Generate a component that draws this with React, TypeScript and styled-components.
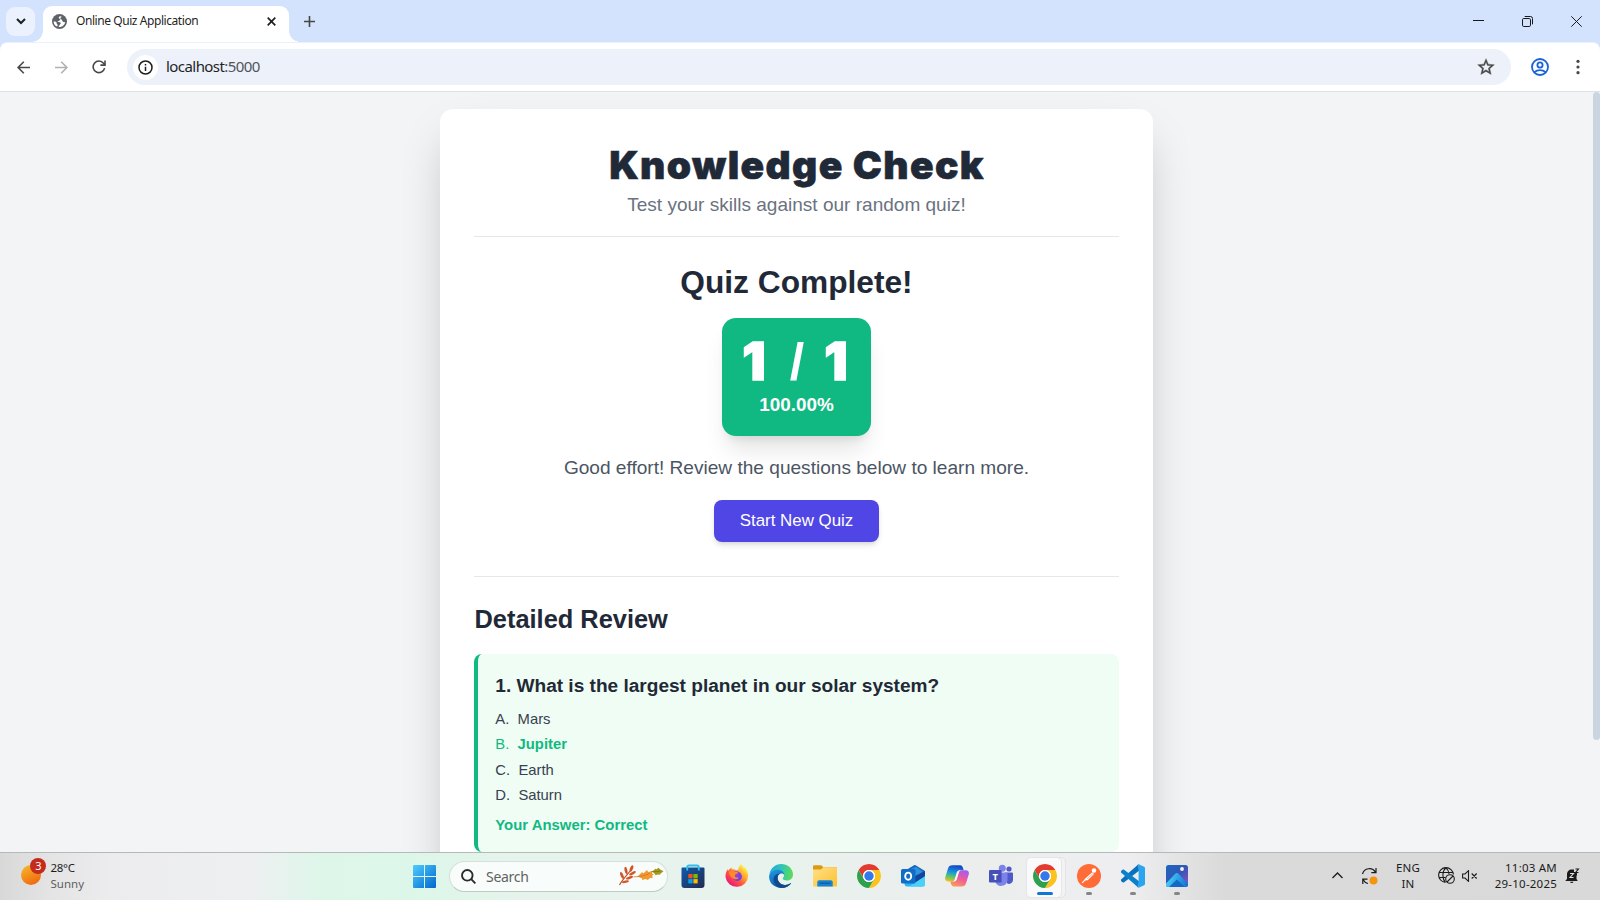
import React from "react";
import styled, { createGlobalStyle } from "styled-components";

const UI = `"Noto Sans", "Open Sans", sans-serif`;
const BODY = `"Liberation Sans", Arial, sans-serif`;

const GlobalStyle = createGlobalStyle`
  * { box-sizing: border-box; }
  body { margin: 0; overflow: hidden; }
  h1, h2, h3, p, ul { margin: 0; padding: 0; }
  svg { display: block; flex: none; }
`;

const Screen = styled.div`
  width: 1600px;
  height: 900px;
  display: flex;
  flex-direction: column;
  overflow: hidden;
  background: #f3f4f6;
`;

/* ---------- browser ---------- */

const TabStrip = styled.div`
  height: 42px;
  flex: none;
  display: flex;
  align-items: flex-start;
  padding: 6px 0 0 6px;
  background: #d3e3fd;
  font-family: ${UI};
`;

const TabSearch = styled.div`
  width: 29px;
  height: 29px;
  margin: 1px 8px 0 0;
  border-radius: 9px;
  background: #ebf2fe;
  display: grid;
  place-items: center;
`;

const Tab = styled.div`
  position: relative;
  width: 246px;
  height: 36px;
  display: flex;
  align-items: center;
  padding: 0 13px 6px 9px;
  border-radius: 9px 9px 0 0;
  background: #fff;
  color: #1f1f1f;
  &::before,
  &::after {
    content: "";
    position: absolute;
    bottom: 0;
    width: 11px;
    height: 11px;
  }
  &::before {
    left: -11px;
    background: radial-gradient(circle at 0 0, transparent 10.5px, #fff 11px);
  }
  &::after {
    right: -11px;
    background: radial-gradient(circle at 100% 0, transparent 10.5px, #fff 11px);
  }
`;

const TabTitle = styled.span`
  flex: 1;
  margin-left: 9px;
  font-size: 12px;
  line-height: 18px;
  letter-spacing: -0.43px;
  white-space: nowrap;
`;

const NewTab = styled.div`
  width: 41px;
  height: 31px;
  display: grid;
  place-items: center;
`;

const WindowControls = styled.div`
  margin-left: auto;
  margin-right: -1px;
  display: flex;
`;

const WindowButton = styled.div`
  width: 49px;
  height: 31px;
  display: grid;
  place-items: center;
`;

const ToolbarShell = styled.div`
  flex: none;
  background: #d3e3fd;
`;

const Toolbar = styled.div`
  height: 50px;
  display: flex;
  align-items: center;
  padding: 1px 6px 0 4px;
  background: linear-gradient(#e9f1fe 0, #e9f1fe 1px, #fff 1px);
  border-bottom: 1px solid #dfe1e5;
  border-radius: 8px 8px 0 0;
`;

const ToolButton = styled.div<{ $w: number }>`
  width: ${(p) => p.$w}px;
  height: 36px;
  display: grid;
  place-items: center;
`;

const Omnibox = styled.div`
  width: 1384px;
  height: 36px;
  margin-left: 9px;
  display: flex;
  align-items: center;
  padding: 0 15px 0 6px;
  border-radius: 18px;
  background: #ecf1fa;
  font-family: ${UI};
`;

const SiteInfo = styled.div`
  width: 25px;
  height: 25px;
  border-radius: 50%;
  background: #fff;
  display: grid;
  place-items: center;
`;

const Url = styled.span`
  flex: 1;
  margin-left: 8px;
  padding-bottom: 2px;
  font-size: 15px;
  line-height: 20px;
  letter-spacing: -0.56px;
  color: #1f1f1f;
`;

const Port = styled.span`
  color: #50545a;
`;

/* ---------- page ---------- */

const Page = styled.main`
  height: 760px;
  flex: none;
  display: flex;
  justify-content: flex-end;
  align-items: flex-start;
  overflow: hidden;
  font-family: ${BODY};
`;

const ScrollThumb = styled.div`
  width: 7px;
  height: 648px;
  margin-left: 440px;
  border-radius: 4px;
  background: #cbd5e1;
`;

const Card = styled.section`
  width: 713px;
  height: 900px;
  flex: none;
  margin-top: 17px;
  padding: 32px 34px;
  border-radius: 13px;
  background: #fff;
  box-shadow: 0 24px 47px -11px rgba(0, 0, 0, 0.25);
`;

const CardHeader = styled.header`
  height: 96px;
  border-bottom: 1px solid #e5e7eb;
  text-align: center;
`;

const Title = styled.h1`
  padding-left: 1px;
  font-family: Inter, sans-serif;
  font-weight: 900;
  font-size: 39px;
  line-height: 48px;
  letter-spacing: 1.35px;
  -webkit-text-stroke: 0.6px #1f2937;
  color: #1f2937;
  white-space: nowrap;
`;

const Subtitle = styled.p`
  margin-top: 2px;
  font-size: 19.05px;
  line-height: 28px;
  color: #6b7280;
`;

const Result = styled.div`
  height: 340px;
  display: flex;
  flex-direction: column;
  align-items: center;
  border-bottom: 1px solid #e5e7eb;
`;

const ResultHeading = styled.h2`
  margin-top: 25px;
  font-size: 31.7px;
  line-height: 40px;
  color: #1f2937;
`;

const ScoreBox = styled.div`
  width: 149px;
  height: 118px;
  margin-top: 16px;
  padding-top: 16px;
  border-radius: 14px;
  background: #10b981;
  box-shadow: 0 19px 23px -5px rgba(0, 0, 0, 0.1), 0 7px 10px -5px rgba(0, 0, 0, 0.1);
  color: #fff;
  text-align: center;
`;

const Score = styled.div`
  display: flex;
  justify-content: center;
  align-items: baseline;
  gap: 20px;
  height: 57px;
  padding-right: 3px;
  font-family: Inter, sans-serif;
  font-weight: 900;
  font-size: 52px;
  line-height: 56px;
  -webkit-text-stroke: 1.4px #fff;
`;

const Slash = styled.span`
  margin-left: 4px;
  font-family: ${BODY};
  font-weight: 700;
  -webkit-text-stroke: 0;
`;

const Percent = styled.div`
  font-size: 18.9px;
  font-weight: 700;
  line-height: 28px;
`;

const Message = styled.p`
  margin-top: 18px;
  font-size: 19.08px;
  line-height: 28px;
  color: #4b5563;
`;

const PrimaryButton = styled.button`
  width: 165px;
  height: 42px;
  margin-top: 18px;
  padding: 0 0 1px;
  border: 0;
  border-radius: 8px;
  background: #4f46e5;
  box-shadow: 0 4px 6px -1px rgba(0, 0, 0, 0.12), 0 2px 4px -2px rgba(0, 0, 0, 0.1);
  font-family: ${BODY};
  font-size: 16.9px;
  color: #fff;
`;

const ReviewHeading = styled.h3`
  margin-top: 26px;
  padding-left: 0.5px;
  font-size: 25.4px;
  line-height: 33px;
  color: #1f2937;
`;

const ReviewItem = styled.article`
  height: 198px;
  margin-top: 18px;
  padding: 18px 17px 17px 17.3px;
  border-left: 4px solid #10b981;
  border-radius: 8px;
  background: #f0fdf4;
`;

const Question = styled.p`
  font-size: 19.07px;
  font-weight: 700;
  line-height: 28px;
  color: #1f2937;
`;

const Options = styled.ul`
  margin-top: 7px;
  list-style: none;
`;

const Option = styled.li<{ $correct?: boolean }>`
  display: flex;
  gap: 8.3px;
  height: 25.3px;
  font-size: 14.8px;
  line-height: 25px;
  color: ${(p) => (p.$correct ? "#10b981" : "#374151")};
  span + span {
    font-weight: ${(p) => (p.$correct ? 700 : 400)};
  }
`;

const Verdict = styled.p`
  margin-top: 6px;
  font-size: 14.9px;
  font-weight: 700;
  line-height: 22px;
  color: #10b981;
`;

/* ---------- taskbar ---------- */

const Taskbar = styled.footer`
  height: 48px;
  flex: none;
  display: flex;
  align-items: center;
  padding-bottom: 1px;
  border-top: 1px solid #b4bab8;
  background: linear-gradient(
    90deg,
    #d8d8d8 0,
    #e4e4e5 50px,
    #ececee 110px,
    #eeeff1 250px,
    #def6ea 320px,
    #dcf7e9 410px,
    #e6f3ec 520px,
    #e8f3ed 760px,
    #ebeeed 930px,
    #eeeef0 1130px,
    #dadada 1225px,
    #d9d9d9 1600px
  );
  font-family: ${UI};
`;

const Weather = styled.div`
  width: 413px;
  display: flex;
  align-items: center;
  padding: 0 0 1px 20px;
`;

const TwoLines = styled.div<{ $align?: string; $ml: number; $w?: number; $ls?: number }>`
  width: ${(p) => (p.$w ? p.$w + "px" : "auto")};
  margin-left: ${(p) => p.$ml}px;
  font-size: 11.5px;
  line-height: 16px;
  letter-spacing: ${(p) => p.$ls ?? 0}px;
  text-align: ${(p) => p.$align ?? "left"};
  color: #1b1b1b;
  white-space: nowrap;
`;

const Muted = styled.div`
  color: #5e5f61;
  letter-spacing: 0;
`;

const StartButton = styled.div`
  padding-top: 1px;
`;

const SearchBox = styled.div`
  width: 219px;
  height: 31px;
  margin: 0 3px 0 13px;
  display: flex;
  align-items: center;
  padding: 0 3px 0 11px;
  border: 1px solid #d4e0da;
  border-bottom-color: #bfcac5;
  border-radius: 16px;
  background: #f8fcfa;
`;

const SearchLabel = styled.span`
  flex: 1;
  margin-left: 10px;
  font-size: 14px;
  letter-spacing: -0.3px;
  color: #5f6362;
`;

const Apps = styled.div`
  display: flex;
`;

const AppSlot = styled.div<{ $active?: boolean }>`
  position: relative;
  width: 44px;
  height: 46px;
  display: grid;
  place-items: center;
  &::before {
    content: "";
    display: ${(p) => (p.$active ? "block" : "none")};
    position: absolute;
    left: 3px;
    top: 4px;
    width: 38px;
    height: 39px;
    border: 1px solid #e4e4e6;
    border-radius: 5px;
    background: #f3f3f5;
  }
  &::after {
    content: "";
    display: ${(p) => (p.$active ? "block" : "none")};
    position: absolute;
    left: 3px;
    top: 4px;
    width: 34px;
    height: 39px;
    border: 1px solid #e6e6e8;
    border-radius: 5px;
    background: #fafafb;
  }
  svg {
    position: relative;
    z-index: 1;
  }
`;

const Indicator = styled.div<{ $active?: boolean }>`
  position: absolute;
  z-index: 2;
  left: 50%;
  bottom: 4px;
  width: ${(p) => (p.$active ? 16 : 6)}px;
  height: 3px;
  border-radius: 2px;
  transform: translateX(-50%);
  background: ${(p) => (p.$active ? "#0a78d4" : "#868686")};
`;

const Tray = styled.div`
  margin-left: auto;
  display: flex;
  align-items: center;
  padding: 0 13px 1px 0;
`;

const TrayIcon = styled.div<{ $w: number }>`
  width: ${(p) => p.$w}px;
  display: grid;
  place-items: center;
`;

/* ---------- app icons ---------- */

const SiteIcon = () => (
  <svg width="15" height="15" viewBox="0 0 15 15">
    <circle cx="7.500" cy="7.500" r="7.500" fill="#5f6368" />
    <path d="M8.300 2.200c-1.200.2-1.700.9-1.400 1.700.3.800 1.200.6 1.300 1.500.1.800-.9 1-1.500 1.500H5.500c.4 1.200 2.300.8 3 1.700.7.900-.3 1.800-1 2.500-.4.500-.4 1.300-1 1.900 3.300.6 6.300-1.700 6.700-4.900-1 .2-1.900 0-2.500-.6-.6-.7-.3-1.500-1.200-2-.7-.4-1.200-.5-1.100-1.200.100-.8.900-.9 1.300-1.600-.4-.3-.8-.5-1.400-.5z" fill="#fff" />
    <path d="M1.700 7.200c.9.300 2 .2 2.700 1 .5.600 0 1.200.5 1.700.4.400.8.500.8 1.200l-.5 1.400C3.200 12 1.500 9.900 1.700 7.200z" fill="#fff" />
  </svg>
);

const StoreIcon = () => (
  <svg width="24" height="24" viewBox="0 0 24 24">
    <defs>
      <linearGradient id="st" x1="0" y1="0" x2="1" y2="1">
        <stop offset="0" stopColor="#0f5ba8" />
        <stop offset="1" stopColor="#232a52" />
      </linearGradient>
    </defs>
    <path d="M.5 4.500a1 1 0 0 1 1-1h21a1 1 0 0 1 1 1V21a3 3 0 0 1-3 3h-17a3 3 0 0 1-3-3z" fill="url(#st)" />
    <path d="M6.200 6.500V3.200A1.700 1.700 0 0 1 7.900 1.500h8.200a1.700 1.700 0 0 1 1.700 1.700V6.500" fill="none" stroke="#2cc0ee" strokeWidth="1.900" />
    <rect x="7.300" y="10" width="4.300" height="4.300" fill="#f25022" />
    <rect x="12.400" y="10" width="4.300" height="4.300" fill="#7fba00" />
    <rect x="7.300" y="15.100" width="4.300" height="4.300" fill="#00a4ef" />
    <rect x="12.400" y="15.100" width="4.300" height="4.300" fill="#ffb900" />
  </svg>
);

const FirefoxIcon = () => (
  <svg width="24" height="24" viewBox="0 0 24 24">
    <defs>
      <linearGradient id="ff" x1=".85" y1=".1" x2=".15" y2=".9">
        <stop offset="0" stopColor="#fff44f" />
        <stop offset=".3" stopColor="#ffb12e" />
        <stop offset=".6" stopColor="#ff5b3c" />
        <stop offset="1" stopColor="#e8127d" />
      </linearGradient>
      <linearGradient id="fp" x1="0" y1="0" x2="1" y2="1">
        <stop offset="0" stopColor="#c040d8" />
        <stop offset="1" stopColor="#5a3fe0" />
      </linearGradient>
    </defs>
    <path d="M16 .3c1.400 1 2.400 2.300 3 4l.9-1.200c2 2.600 3.300 5.700 3.300 9A11.400 11.400 0 0 1 .6 13.500C.3 10 1.200 7 2.900 5.200l.4 1.600C4.200 5.300 5.400 4.200 6.900 3.500l-.3 1.900c1.900-.3 3.500 0 4.900.8l1.800-.6C13.600 3.500 14.500 1.700 16 .3z" fill="url(#ff)" />
    <path d="M7.300 11c-.4-2 .9-3.300 2.300-3.600C13.500 6.400 17 9 16.900 12.700c-.1 2.500-2.200 4.300-4.700 4.300-3 0-5-2.200-4.900-6z" fill="url(#fp)" />
    <path d="M3.800 8c1.900-1.500 4.200-1.300 5.600-.2l2.900.3c.9.100.8 1-.1 1.500-1.400.7-2 .7-2.300 2.100-.2 1.500 1.500 2.300 3.900 1.700-1.200 2-4 2.600-6.200.9C5.600 12.800 4 10.500 3.800 8z" fill="#ff8a2c" />
  </svg>
);

const EdgeIcon = () => (
  <svg width="24" height="24" viewBox="0 0 24 24">
    <defs>
      <linearGradient id="eg" x1="0" y1=".3" x2="1" y2=".4">
        <stop offset="0" stopColor="#2aa6e2" />
        <stop offset=".5" stopColor="#2fc5b8" />
        <stop offset="1" stopColor="#5ddc55" />
      </linearGradient>
      <linearGradient id="eb" x1="0" y1="0" x2=".5" y2="1">
        <stop offset="0" stopColor="#1b9de2" />
        <stop offset="1" stopColor="#0d56a8" />
      </linearGradient>
    </defs>
    <path d="M.4 10.300C1.300 4.300 6.200 0 12.100 0 18.800 0 24 4.800 24 10.400c0 3.500-2.500 6-5.800 6-2.700 0-4.400-1-4.400-2 0-.8 1.300-1.200 1.300-3.400 0-2.400-2.500-4.800-6.500-4.800C4.900 6.200 2.200 7.700.4 10.300z" fill="url(#eg)" />
    <path d="M.1 12.300C.3 8.400 4.200 5.700 8.600 5.700c4 0 6.700 2.500 6.700 5.200-1-1.300-2.400-1.700-3.700-1.400-2.500.7-3.300 3-2.900 5.500.6 3.600 4 6.200 7.600 5.900 2-.1 3.800-.8 5-1.700.5-.2.700.1.500.5C19.700 22.400 16.200 24 12.400 24 5.500 24-.2 19 .1 12.300z" fill="url(#eb)" />
    <path d="M8.700 15c-.4-2.500.6-4.900 2.900-5.500-5-.5-8 3.500-6.700 8.200 1.200 4 5 6.300 8.700 6.200 3.500-.2 6.400-2 8.200-4.200.2-.4 0-.7-.5-.5-1.200.9-3 1.600-5 1.700-3.600.3-7-2.300-7.600-5.900z" fill="#114a8b" />
  </svg>
);

const FolderIcon = () => (
  <svg width="24" height="24" viewBox="0 0 24 24">
    <defs>
      <linearGradient id="fo" x1="0" y1="0" x2="1" y2="1">
        <stop offset="0" stopColor="#ffe088" />
        <stop offset="1" stopColor="#fcc12f" />
      </linearGradient>
    </defs>
    <path d="M0 2.500A1.200 1.200 0 0 1 1.200 1.300h7l2.300 2H23a1 1 0 0 1 1 1V7H0z" fill="#dc9a12" />
    <path d="M0 5.600h8l2.300-2.300H23a1 1 0 0 1 1 1V21.500a1 1 0 0 1-1 1H1a1 1 0 0 1-1-1z" fill="url(#fo)" />
    <path d="M4.300 22.500v-4.200a2 2 0 0 1 2-2h11.400a2 2 0 0 1 2 2v4.200z" fill="#1683d2" />
    <path d="M6.800 19.200h10.400" stroke="#0c5ca8" strokeWidth="1.300" />
  </svg>
);

const ChromeIcon = () => (
  <svg width="24" height="24" viewBox="0 0 24 24">
    <circle cx="12" cy="12" r="12" fill="#fff" />
    <path d="M1.610 6A12 12 0 0 1 22.390 6H12a6 6 0 0 0-5.200 9z" fill="#e33b2e" />
    <path d="M22.390 6A12 12 0 0 1 12 24l5.200-9A6 6 0 0 0 12 6z" fill="#fcc31e" />
    <path d="M12 24A12 12 0 0 1 1.610 6l5.190 9A6 6 0 0 0 17.200 15z" fill="#2da14c" />
    <circle cx="12" cy="12" r="6" fill="#fff" />
    <circle cx="12" cy="12" r="4.700" fill="#3478ea" />
  </svg>
);

const OutlookIcon = () => (
  <svg width="24" height="24" viewBox="0 0 24 24">
    <path d="M3.500 7 13 1.300a1.500 1.500 0 0 1 1.600 0L24 7v4H3.500z" fill="#1769c0" />
    <path d="M9 5.500 15 3l6.500 4.500L17.500 12H9z" fill="#2f92dd" />
    <path d="M24 7.500V20a2.500 2.500 0 0 1-2.500 2.500H6.200A2.700 2.700 0 0 1 3.500 20v-3z" fill="#28b6f0" />
    <path d="M24 7v5l-9.500 6.500L12 13z" fill="#12459b" />
    <path d="M24 12.500V20a2.500 2.500 0 0 1-2.500 2.500H8z" fill="#4bd0f8" />
    <rect x="0" y="5" width="14.500" height="14.500" rx="1.500" fill="#0f6cc9" />
    <ellipse cx="7.200" cy="12.200" rx="3" ry="3.600" fill="none" stroke="#fff" strokeWidth="1.900" />
  </svg>
);

const CopilotIcon = () => (
  <svg width="24" height="24" viewBox="0 0 24 24">
    <defs>
      <linearGradient id="ca" x1=".4" y1="0" x2=".2" y2="1">
        <stop offset="0" stopColor="#1748c4" />
        <stop offset=".4" stopColor="#1694e0" />
        <stop offset=".7" stopColor="#5cc46c" />
        <stop offset="1" stopColor="#f3c21c" />
      </linearGradient>
      <linearGradient id="cb" x1=".7" y1="0" x2=".3" y2="1">
        <stop offset="0" stopColor="#a45bf0" />
        <stop offset=".5" stopColor="#ef5a9c" />
        <stop offset="1" stopColor="#fb9a55" />
      </linearGradient>
    </defs>
    <path d="M7.500 1.200h7.700c1.600 0 2.200 1 2.700 2.500l.8 2.500h-3.300c-1.800 0-2.700 1-3.200 2.700l-1.900 6.200c-.5 1.600-1.200 2.300-2.700 2.300H3.200C.9 17.400-.4 15.600.2 13.500L2.900 4.700C3.600 2.300 5 1.200 7.500 1.200z" fill="url(#ca)" />
    <path d="M16.500 22.500H8.800c-1.600 0-2.200-1-2.700-2.500l-.8-2.500h3.300c1.800 0 2.700-1 3.200-2.700l1.900-6.200c.5-1.600 1.200-2.300 2.700-2.300h4.400c2.300 0 3.600 1.800 3 3.900L21.100 19c-.7 2.400-2.100 3.500-4.600 3.500z" fill="url(#cb)" />
    <path d="M11.700 8.500 9.800 15c-.4 1.400-1 2.200-2 2.500h1c1.800 0 2.600-1 3.100-2.700l1.900-6.200c.4-1.300.9-2 1.900-2.300-2 0-3.400.6-4 2.200z" fill="#f6f8fa" />
  </svg>
);

const TeamsIcon = () => (
  <svg width="24" height="24" viewBox="0 0 24 24">
    <circle cx="20" cy="5" r="2.600" fill="#5059c9" />
    <circle cx="13.300" cy="4.300" r="3.500" fill="#7b83eb" />
    <path d="M16 8.500h7a1 1 0 0 1 1 1v6.300a4 4 0 0 1-6 3.500z" fill="#5059c9" />
    <path d="M8 8.500h9.500a1 1 0 0 1 1 1v6.500a6.300 6.300 0 0 1-12.300 1.500z" fill="#7b83eb" />
    <rect x="0" y="6" width="12.600" height="12.400" rx="1.200" fill="#474fb8" />
    <text x="6.300" y="15.600" textAnchor="middle" fontFamily="Open Sans, sans-serif" fontWeight="700" fontSize="9.500" fill="#fff">T</text>
  </svg>
);

const PostmanIcon = () => (
  <svg width="24" height="24" viewBox="0 0 24 24">
    <circle cx="12" cy="12" r="12" fill="#ff6c37" />
    <circle cx="17" cy="6.500" r="2.300" fill="#fff" />
    <path d="M15.300 8.300 17 10l-6.300 6.200-3.500.4 1.300-2.400z" fill="#fff" />
    <path d="m8.500 15.300-3.300 3.500" stroke="#fff" strokeWidth="1.200" />
    <path d="m16 9.500-6 5.500" stroke="#ff9a75" strokeWidth=".7" />
  </svg>
);

const VSCodeIcon = () => (
  <svg width="24" height="24" viewBox="0 0 24 24">
    <path d="M17.500.200 0 15.600c-.4.400-.4 1 0 1.400l1.500 1.300c.4.300.9.400 1.300.1L18 6.700z" fill="#0a72bd" />
    <path d="M17.500 23.800 0 8.400C-.4 8-.4 7.400 0 7l1.500-1.300c.4-.3.900-.4 1.300-.1L18 17.300z" fill="#0b80cb" />
    <path d="M17.700 23.800c-.6.300-1.300.100-1.700-.3.600.6 1.600.2 1.600-.6V1.100c0-.8-1-1.200-1.600-.6.400-.4 1.100-.6 1.700-.3l5.400 2.500c.5.300.9.800.9 1.400v15.800c0 .6-.4 1.100-.9 1.400z" fill="#2aa5f0" />
  </svg>
);

const PhotosIcon = () => (
  <svg width="24" height="24" viewBox="0 0 24 24">
    <defs>
      <linearGradient id="pa" x1="0" y1="0" x2="1" y2="1">
        <stop offset="0" stopColor="#1a68c0" />
        <stop offset=".5" stopColor="#3456b4" />
        <stop offset="1" stopColor="#9a4fc0" />
      </linearGradient>
      <linearGradient id="pb" x1="0" y1=".5" x2="1" y2=".7">
        <stop offset="0" stopColor="#45d3fa" />
        <stop offset="1" stopColor="#1472d0" />
      </linearGradient>
    </defs>
    <rect x="1" y="1" width="22" height="22" rx="2.500" fill="url(#pa)" />
    <path d="M1 19.500 10 9.900a2.600 2.600 0 0 1 3.800 0L23 19.500v1a2.500 2.500 0 0 1-2.500 2.500h-17A2.500 2.500 0 0 1 1 20.500z" fill="url(#pb)" />
    <path d="m12 15.500 7.800 7.500H4z" fill="#1668c6" />
    <circle cx="17" cy="5" r="1.900" fill="#f4f6fb" />
  </svg>
);

const StartIcon = () => (
  <svg width="23" height="23" viewBox="0 0 23 23">
    <defs>
      <linearGradient id="wi" gradientUnits="userSpaceOnUse" x1="0" y1="0" x2="23" y2="23">
        <stop offset="0" stopColor="#4fccff" />
        <stop offset="1" stopColor="#0068cc" />
      </linearGradient>
    </defs>
    <path d="M0 1a1 1 0 0 1 1-1h10v11H0zM12 0h10a1 1 0 0 1 1 1v10H12zM0 12h11v11H1a1 1 0 0 1-1-1zM12 12h11v10a1 1 0 0 1-1 1H12z" fill="url(#wi)" />
  </svg>
);

const LeavesIcon = () => (
  <svg width="46" height="22" viewBox="0 0 46 22">
    <g stroke="#c2481f" strokeWidth="1.100" fill="none">
      <path d="M1.500 20C4 15 9 10 13 5" />
    </g>
    <g fill="#d2552a">
      <ellipse cx="13.500" cy="3.500" rx="1.500" ry="3.400" transform="rotate(20 13.500 3.500)" />
      <ellipse cx="8" cy="5.500" rx="1.400" ry="3.700" transform="rotate(-12 8 5.500)" />
      <ellipse cx="4" cy="10.500" rx="1.400" ry="3.700" transform="rotate(-22 4 10.500)" />
      <ellipse cx="14.500" cy="8.300" rx="1.300" ry="3.700" transform="rotate(62 14.500 8.300)" />
      <ellipse cx="11.500" cy="12.700" rx="1.300" ry="3.700" transform="rotate(70 11.500 12.700)" />
      <ellipse cx="7.500" cy="16.700" rx="1.200" ry="3.500" transform="rotate(78 7.500 16.700)" />
    </g>
    <path d="M18.500 11.500c3-.6 3.300-3 5.500-4.300l1.600 1L29 5l1.200 2 4.300-1-.5 2.500 1.700 1-1.500 1.200.5 2.200-2.600.200-2.300 2-2.200-1-3.300.9-.4-1.800c-1.300 0-2-.9-3.400-1.200z" fill="#f19a32" />
    <path d="M15.500 11.800c5 .200 11-1 16-3.300" stroke="#cf6f1c" strokeWidth=".7" fill="none" />
    <path d="M33.500 6.500c1.500-.2 2.500-1.500 3.700-2.800l1.400.600 2-1.500 1.300 1.500 3.600 1.900-2.200 1.700-1.700 1.900-2-.4-2 .8c-.6-1.200-2-2.700-4.100-3.700z" fill="#a39a1c" />
    <path d="M33.500 6.500c3 .3 6 .2 9-.3" stroke="#6f6a10" strokeWidth=".6" fill="none" />
  </svg>
);

const options = ["Mars", "Jupiter", "Earth", "Saturn"];

const apps: { icon: React.ReactNode; running?: boolean; active?: boolean }[] = [
  { icon: <StoreIcon /> },
  { icon: <FirefoxIcon /> },
  { icon: <EdgeIcon /> },
  { icon: <FolderIcon /> },
  { icon: <ChromeIcon /> },
  { icon: <OutlookIcon /> },
  { icon: <CopilotIcon /> },
  { icon: <TeamsIcon /> },
  { icon: <ChromeIcon />, active: true, running: true },
  { icon: <PostmanIcon />, running: true },
  { icon: <VSCodeIcon />, running: true },
  { icon: <PhotosIcon />, running: true },
];

export default function App() {
  return (
    <Screen>
      <GlobalStyle />
      <TabStrip>
        <TabSearch>
          <svg width="10" height="7" viewBox="0 0 10 7" fill="none" stroke="#1f1f1f" strokeWidth="2">
            <path d="m1 1 4 4 4-4" />
          </svg>
        </TabSearch>
        <Tab>
          <SiteIcon />
          <TabTitle>Online Quiz Application</TabTitle>
          <svg width="9" height="9" viewBox="0 0 9 9" stroke="#1f1f1f" strokeWidth="1.700">
            <path d="m.7.7 7.600 7.600M8.300.7.700 8.300" />
          </svg>
        </Tab>
        <NewTab>
          <svg width="11" height="11" viewBox="0 0 11 11" stroke="#444746" strokeWidth="1.600">
            <path d="M5.500 0v11M0 5.500h11" />
          </svg>
        </NewTab>
        <WindowControls>
          <WindowButton>
            <svg width="11" height="11" viewBox="0 0 11 11" stroke="#1a1a1a">
              <path d="M0 4.500h11" />
            </svg>
          </WindowButton>
          <WindowButton>
            <svg width="11" height="11" viewBox="0 0 11 11" fill="none" stroke="#1a1a1a">
              <rect x=".5" y="2.500" width="8" height="8" rx="1.300" />
              <path d="M2.700.5h5.800a2 2 0 0 1 2 2v5.800" />
            </svg>
          </WindowButton>
          <WindowButton>
            <svg width="11" height="11" viewBox="0 0 11 11" stroke="#1a1a1a">
              <path d="m.3.3 10.400 10.400M10.700.3.300 10.700" />
            </svg>
          </WindowButton>
        </WindowControls>
      </TabStrip>

      <ToolbarShell>
        <Toolbar>
          <ToolButton $w={38}>
            <svg width="13" height="13" viewBox="0 0 13 13" fill="none" stroke="#474747" strokeWidth="1.600">
              <path d="M13 6.500H1.200M6.800.8 1.100 6.500l5.700 5.700" />
            </svg>
          </ToolButton>
          <ToolButton $w={38}>
            <svg width="13" height="13" viewBox="0 0 13 13" fill="none" stroke="#b0b1b3" strokeWidth="1.600">
              <path d="M0 6.500h11.800M6.200.8l5.700 5.700-5.700 5.700" />
            </svg>
          </ToolButton>
          <ToolButton $w={38}>
            <svg width="14" height="14" viewBox="0 0 14 14" fill="none" stroke="#474747" strokeWidth="1.600">
              <path d="M12.600 8.100A5.800 5.800 0 1 1 11.500 3.200l1.300 1.500" />
              <path d="M13 .5v4.600H8.400" />
            </svg>
          </ToolButton>
          <Omnibox>
            <SiteInfo>
              <svg width="15" height="15" viewBox="0 0 15 15" fill="none" stroke="#1f1f1f" strokeWidth="1.500">
                <circle cx="7.500" cy="7.500" r="6.500" />
                <path d="M7.500 6.700v4.300M7.500 4v1.500" />
              </svg>
            </SiteInfo>
            <Url>
              localhost<Port>:5000</Port>
            </Url>
            <svg width="20" height="20" viewBox="0 0 24 24" fill="#474747" stroke="#474747" strokeWidth=".4">
              <path d="m22 9.240-7.190-.62L12 2 9.190 8.630 2 9.240l5.460 4.730L5.820 21 12 17.270 18.180 21l-1.630-7.030zM12 15.400l-3.760 2.270 1-4.280-3.320-2.880 4.380-.38L12 6.100l1.710 4.040 4.380.38-3.320 2.880 1 4.280z" />
            </svg>
          </Omnibox>
          <ToolButton $w={58}>
            <svg width="18" height="18" viewBox="0 0 18 18" fill="none" stroke="#1b62d8" strokeWidth="1.800">
              <circle cx="9" cy="9" r="8" />
              <circle cx="9" cy="7" r="2.600" />
              <path d="M3.300 14.300c3.300-2.800 8.100-2.800 11.400 0" />
            </svg>
          </ToolButton>
          <ToolButton $w={17}>
            <svg width="4" height="16" viewBox="0 0 4 16" fill="#474747">
              <circle cx="2" cy="2.300" r="1.600" />
              <circle cx="2" cy="8" r="1.600" />
              <circle cx="2" cy="13.700" r="1.600" />
            </svg>
          </ToolButton>
        </Toolbar>
      </ToolbarShell>

      <Page>
        <Card>
          <CardHeader>
            <Title>Knowledge Check</Title>
            <Subtitle>Test your skills against our random quiz!</Subtitle>
          </CardHeader>
          <Result>
            <ResultHeading>Quiz Complete!</ResultHeading>
            <ScoreBox>
              <Score>
                <span>1</span>
                <Slash>/</Slash>
                <span>1</span>
              </Score>
              <Percent>100.00%</Percent>
            </ScoreBox>
            <Message>Good effort! Review the questions below to learn more.</Message>
            <PrimaryButton>Start New Quiz</PrimaryButton>
          </Result>
          <ReviewHeading>Detailed Review</ReviewHeading>
          <ReviewItem>
            <Question>1. What is the largest planet in our solar system?</Question>
            <Options>
              {options.map((name, i) => (
                <Option key={name} $correct={i === 1}>
                  <span>{"ABCD"[i]}.</span>
                  <span>{name}</span>
                </Option>
              ))}
            </Options>
            <Verdict>Your Answer: Correct</Verdict>
          </ReviewItem>
        </Card>
        <ScrollThumb />
      </Page>

      <Taskbar>
        <Weather>
          <svg width="28" height="38" viewBox="0 -3 28 38">
            <defs>
              <linearGradient id="su" x1=".2" y1="0" x2=".7" y2="1">
                <stop offset="0" stopColor="#f5b62a" />
                <stop offset="1" stopColor="#f0660e" />
              </linearGradient>
            </defs>
            <circle cx="11" cy="15" r="10" fill="url(#su)" />
            <circle cx="18" cy="6" r="8" fill="#c42b1c" />
            <text x="18.300" y="10" textAnchor="middle" fontFamily="Noto Sans, sans-serif" fontSize="11" fill="#fff">3</text>
          </svg>
          <TwoLines $ml={2.5} $ls={-0.3}>
            <div>28°C</div>
            <Muted>Sunny</Muted>
          </TwoLines>
        </Weather>
        <StartButton>
          <StartIcon />
        </StartButton>
        <SearchBox>
          <svg width="15" height="15" viewBox="0 0 15 15" fill="none" stroke="#2b2b2b" strokeWidth="1.900">
            <circle cx="6.300" cy="6.300" r="5.300" />
            <path d="m10.200 10.200 4.200 4.200" />
          </svg>
          <SearchLabel>Search</SearchLabel>
          <LeavesIcon />
        </SearchBox>
        <Apps>
          {apps.map((a, i) => (
            <AppSlot key={i} $active={a.active}>
              {a.icon}
              {a.running && <Indicator $active={a.active} />}
            </AppSlot>
          ))}
        </Apps>
        <Tray>
          <TrayIcon $w={32}>
            <svg width="11" height="7" viewBox="0 0 11 7" fill="none" stroke="#1b1b1b" strokeWidth="1.300">
              <path d="m.5 6 5-5 5 5" />
            </svg>
          </TrayIcon>
          <TrayIcon $w={32}>
            <svg width="17" height="18" viewBox="0 0 17 18" fill="none" stroke="#1b1b1b" strokeWidth="1.200">
              <path d="M1.500 7A7 7 0 0 1 14.500 5.500M15 1v4.700h-4.700M1.800 17v-4.800h4.700M2 12.500c1 2 3 3.500 5 4" />
              <circle cx="12.500" cy="13.500" r="4" fill="#f7940d" stroke="none" />
            </svg>
          </TrayIcon>
          <TwoLines $align="center" $ml={0} $w={46} $ls={0.2}>
            <div>ENG</div>
            <div>IN</div>
          </TwoLines>
          <TrayIcon $w={30}>
            <svg width="17" height="17" viewBox="0 0 17 17" fill="none" stroke="#1b1b1b" strokeWidth="1.100">
              <path d="M7.500 15.400A7.400 7.400 0 1 1 15.400 7.500M1 5.500h14M1 10.500h6.500M7.500 15.400C3.500 11 4.500 3.500 8 .8c2 1.700 2.900 4 3.100 6.200" />
              <circle cx="12" cy="12" r="4.300" />
              <path d="m9 15 6-6" />
            </svg>
          </TrayIcon>
          <TrayIcon $w={18}>
            <svg width="16" height="12" viewBox="0 0 16 12" fill="none" stroke="#1b1b1b" strokeWidth="1.100">
              <path d="M.6 4v4H3l3.500 3.300V.7L3 4zM9.700 3.500l5 5M14.700 3.500l-5 5" />
            </svg>
          </TrayIcon>
          <TwoLines $align="right" $ml={8} $w={70} $ls={0.22}>
            <div>11:03 AM</div>
            <div>29-10-2025</div>
          </TwoLines>
          <TrayIcon $w={30}>
            <svg width="15" height="16" viewBox="0 0 15 16">
              <path d="M2 6.500C2 3.500 4 1.500 6.700 1.500H9V4h3v3.500h-.5V11l1 1.500v.5H.5v-.5L2 11zM5 13.700h3.500a1.800 1.800 0 0 1-3.500 0z" fill="#1b1b1b" />
              <path d="M10.500 1h3l-3 3.500h3" stroke="#1b1b1b" strokeWidth="1.100" fill="none" />
              <path d="M5 5.500h3.500L5 9.500h3.500" stroke="#e0e0e0" strokeWidth="1.100" fill="none" />
            </svg>
          </TrayIcon>
        </Tray>
      </Taskbar>
    </Screen>
  );
}
